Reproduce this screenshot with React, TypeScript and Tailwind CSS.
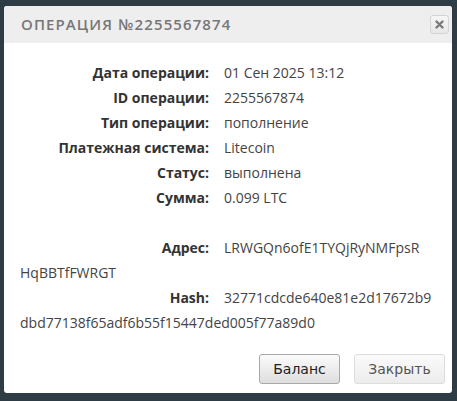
import React from "react";

type Row = { label: string; value: string; rest?: string };

const rows: Row[] = [
  { label: "Дата операции:", value: "01 Сен 2025 13:12" },
  { label: "ID операции:", value: "2255567874" },
  { label: "Тип операции:", value: "пополнение" },
  { label: "Платежная система:", value: "Litecoin" },
  { label: "Статус:", value: "выполнена" },
  { label: "Сумма:", value: "0.099 LTC" },
];

// long values wrap onto a second line starting at the left edge
const extra: Row[] = [
  { label: "Адрес:", value: "LRWGQn6ofE1TYQjRyNMFpsR", rest: "HqBBTfFWRGT" },
  { label: "Hash:", value: "32771cdcde640e81e2d17672b9", rest: "dbd77138f65adf6b55f15447ded005f77a89d0" },
];

function InfoRow({ label, value, rest }: Row) {
  return (
    <>
      <div className="flex leading-[25px]">
        <span className="w-[204px] shrink-0 pr-[15px] text-right font-bold text-[#333]">{label}</span>
        <span className="text-[#444]">{value}</span>
      </div>
      {rest && <div className="leading-[25px] text-[#444]">{rest}</div>}
    </>
  );
}

const App: React.FC = () => {
  return (
    <div className="min-h-[401px] w-[457px] bg-[#2e3c46] pt-[6px] pl-[4px] pr-[5px] pb-[8px]">
      <div className="flex h-[387px] flex-col overflow-hidden rounded-[3px] bg-white">
        <div className="flex h-[37px] items-center justify-between bg-[#eeeeee] pl-[17px] pr-[3px]">
          <h2
            className="text-[15px] font-semibold uppercase tracking-[1.1px] text-[#777]"
            style={{ fontFamily: '"Open Sans", sans-serif' }}
          >
            Операция №2255567874
          </h2>
          <button className="flex h-[19px] w-[19px] items-center justify-center rounded-[3px] border border-[#d4d4d4] bg-gradient-to-b from-[#f6f6f6] to-[#e6e6e6]">
            <svg width="9" height="9" viewBox="0 0 9 9">
              <path d="M1.5 1.5 L7.5 7.5 M7.5 1.5 L1.5 7.5" stroke="#7a7a7a" strokeWidth="2.4" strokeLinecap="round" />
            </svg>
          </button>
        </div>

        <div
          className="flex-1 pl-[16px] pr-[12px] pt-[17px] text-[14px]"
          style={{ fontFamily: '"Open Sans", sans-serif' }}
        >
          {rows.map((r) => (
            <InfoRow key={r.label} {...r} />
          ))}
          <div className="h-[25px]" />
          {extra.map((r) => (
            <InfoRow key={r.label} {...r} />
          ))}
        </div>

        <div
          className="flex justify-end gap-[14px] pb-[9px] pr-[7px]"
          style={{ fontFamily: '"DejaVu Sans", sans-serif' }}
        >
          <button className="h-[30px] w-[81px] rounded-[3px] border border-[#a9a9a9] bg-gradient-to-b from-[#fbfbfb] to-[#dedede] text-[14px] text-[#222]">
            Баланс
          </button>
          <button className="h-[30px] w-[91px] rounded-[3px] border border-[#dcdcdc] bg-gradient-to-b from-[#fafafa] to-[#ececec] text-[14px] text-[#555]">
            Закрыть
          </button>
        </div>
      </div>
    </div>
  );
};

export default App;
